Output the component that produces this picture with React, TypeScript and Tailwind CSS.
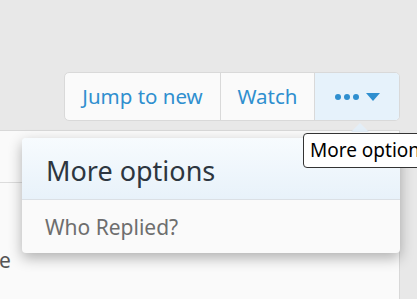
import React from 'react';

const App: React.FC = () => {
  return (
    <div className="relative h-[299px] w-[417px] overflow-hidden bg-[#e8e8e8] font-['Noto_Sans','Open_Sans',sans-serif]">
      <div className="h-[72px]"></div>
      <div className="flex justify-end pr-[17px]">
        <div className="flex h-[49px] w-[336px] overflow-hidden rounded-[5px] border border-[#d9d9d9] bg-[#fafafa] text-[20.5px] text-[#2f8fcf]">
          <button className="flex w-[156px] items-center justify-center border-r border-[#d9d9d9]">Jump to new</button>
          <button className="flex w-[94px] items-center justify-center border-r border-[#d9d9d9]">Watch</button>
          <button className="flex flex-1 items-center justify-center gap-[7px] bg-[#e6f2fb]">
            <span className="flex gap-[3px]">
              <span className="h-[6px] w-[6px] rounded-full bg-[#2f8fcf]"></span>
              <span className="h-[6px] w-[6px] rounded-full bg-[#2f8fcf]"></span>
              <span className="h-[6px] w-[6px] rounded-full bg-[#2f8fcf]"></span>
            </span>
            <svg width="14" height="8" viewBox="0 0 14 8"><path d="M0 0h14L7 8z" fill="#2f8fcf" /></svg>
          </button>
        </div>
      </div>
      <div className="mr-[17px] mt-[9px] h-[200px] border-t border-r border-[#d8d8d8] bg-[#fafafa]">
        <div className="h-[52px] border-b border-[#dcdcdc]"></div>
        <div className="-ml-[1px] pt-[67px] text-[21px] leading-none text-[#555]">e</div>
      </div>

      <svg className="absolute left-[351px] top-[122px]" width="18" height="10" viewBox="0 0 18 10"><path d="M0 10L9 1l9 9z" fill="#e3eef7" /></svg>

      <div className="absolute left-[22px] top-[138px] w-[378px] rounded-[4px] bg-[#fafafa] shadow-[0_5px_14px_rgba(0,0,0,0.3)]">
        <div className="flex h-[62px] items-center rounded-t-[4px] border-b border-[#dbe0e5] bg-gradient-to-b from-[#f7fbfe] to-[#e8f2fa] pl-[24px] pt-[5px] text-[27px] text-[#2d3640]">More options</div>
        <div className="flex h-[53px] items-center pl-[23px] pt-[2px] text-[21px] text-[#6e6e6e]">Who Replied?</div>
      </div>

      <div className="absolute left-[303px] top-[133px] flex h-[35px] items-center whitespace-nowrap rounded-[4px] border border-[#333] bg-white pl-[6px] pr-[6px] text-[19px] text-black">More options</div>
    </div>
  );
};

export default App;
